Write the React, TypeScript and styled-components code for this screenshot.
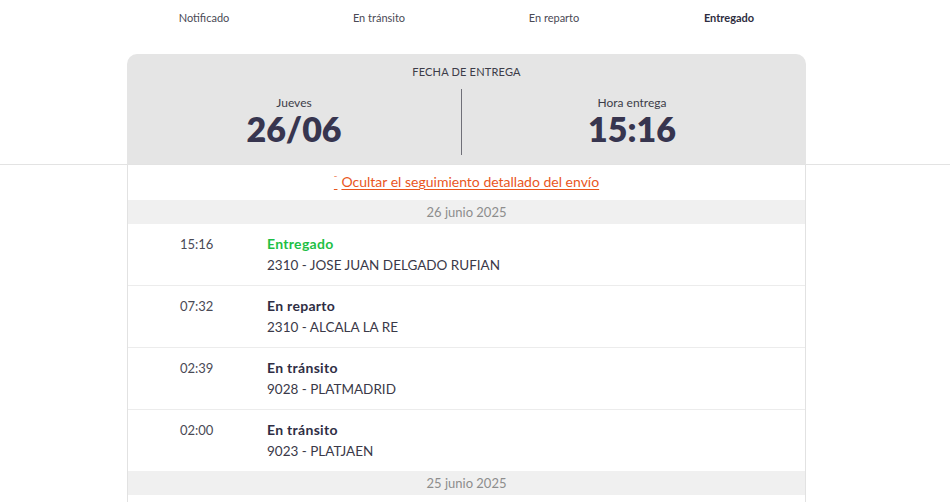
import React from "react";
import styled, { createGlobalStyle } from "styled-components";

const Global = createGlobalStyle`
  html, body { margin: 0; padding: 0; background: #fff; }
  body { font-family: Lato, "Open Sans", sans-serif; color: #35344a; overflow: hidden; }
`;

const Page = styled.div`
  width: 100%;
`;

const Center = styled.div`
  padding-right: 17px;
`;

const Steps = styled.div`
  width: 700px;
  margin: 0 auto;
  display: grid;
  grid-template-columns: repeat(4, 1fr);
  height: 36px;
`;

const Step = styled.div<{ $active?: boolean }>`
  text-align: center;
  font-size: 11px;
  line-height: 36px;
  color: ${(p) => (p.$active ? "#2e2d40" : "#4a4a55")};
  font-weight: ${(p) => (p.$active ? 700 : 400)};
`;

const Top = styled.div`
  width: 679px;
  margin: 18px auto 0;
`;

const DeliveryCard = styled.div`
  background: #e5e5e5;
  border-radius: 10px 10px 0 0;
  padding-top: 12px;
  height: 110px;
  box-sizing: border-box;
`;

const CardTitle = styled.div`
  text-align: center;
  font-size: 11px;
  line-height: 12px;
  color: #3c3c48;
  letter-spacing: 0.2px;
`;

const Split = styled.div`
  margin-top: 11px;
  display: grid;
  grid-template-columns: 334px 1px 1fr;
  height: 66px;
`;

const Divider = styled.div`
  background: #6f6f78;
`;

const Half = styled.div<{ $shift?: number }>`
  display: flex;
  flex-direction: column;
  align-items: center;
  padding-top: 7px;
  padding-right: ${(p) => p.$shift ?? 0}px;
`;

const Small = styled.div`
  font-size: 12px;
  line-height: 14px;
  color: #3c3c48;
`;

const Big = styled.div`
  margin-top: 3px;
  font-size: 34px;
  line-height: 32px;
  font-weight: 800;
  color: #37354f;
`;

const Body = styled.div`
  border-top: 1px solid #e3e3e3;
`;

const List = styled.div`
  width: 679px;
  margin: 0 auto;
  border-left: 1px solid #e2e2e2;
  border-right: 1px solid #e2e2e2;
  box-sizing: border-box;
`;

const LinkRow = styled.div`
  height: 35px;
  display: flex;
  align-items: center;
  justify-content: center;
  padding-bottom: 2px;
  box-sizing: border-box;
`;

const Toggle = styled.a`
  color: #e9561d;
  font-size: 14px;
  text-decoration: underline;
  text-underline-offset: 2px;
  cursor: pointer;
`;

const Caret = styled.span`
  font-size: 9px;
  vertical-align: 4px;
  margin-right: 4px;
`;

const DateBar = styled.div`
  background: #f0f0f0;
  height: 24px;
  line-height: 24px;
  text-align: center;
  font-size: 13px;
  color: #8d8d8d;
`;

const Row = styled.div`
  display: grid;
  grid-template-columns: 139px 1fr;
  padding: 12px 0 12px 0;
  border-bottom: 1px solid #ececec;
  &:last-of-type { border-bottom: none; }
`;

const Time = styled.div`
  font-size: 13px;
  line-height: 16px;
  color: #4a4a55;
  padding-left: 52px;
`;

const Info = styled.div`
  display: flex;
  flex-direction: column;
  gap: 5px;
`;

const Status = styled.div<{ $done?: boolean }>`
  font-size: 14px;
  line-height: 16px;
  font-weight: 700;
  letter-spacing: 0.3px;
  color: ${(p) => (p.$done ? "#1fbf45" : "#2f2e44")};
`;

const Place = styled.div`
  font-size: 13.5px;
  line-height: 16px;
  color: #3a3948;
`;

const events = [
  { time: "15:16", status: "Entregado", place: "2310 - JOSE JUAN DELGADO RUFIAN", done: true },
  { time: "07:32", status: "En reparto", place: "2310 - ALCALA LA RE" },
  { time: "02:39", status: "En tránsito", place: "9028 - PLATMADRID" },
  { time: "02:00", status: "En tránsito", place: "9023 - PLATJAEN" },
];

export default function App() {
  return (
    <Page>
      <Global />
      <Center>
        <Steps>
          <Step>Notificado</Step>
          <Step>En tránsito</Step>
          <Step>En reparto</Step>
          <Step $active>Entregado</Step>
        </Steps>
        <Top>
          <DeliveryCard>
            <CardTitle>FECHA DE ENTREGA</CardTitle>
            <Split>
              <Half>
                <Small>Jueves</Small>
                <Big>26/06</Big>
              </Half>
              <Divider />
              <Half $shift={4}>
                <Small>Hora entrega</Small>
                <Big>15:16</Big>
              </Half>
            </Split>
          </DeliveryCard>
        </Top>
      </Center>
      <Body>
        <Center>
          <List>
            <LinkRow>
              <Toggle>
                <Caret>¯</Caret>Ocultar el seguimiento detallado del envío
              </Toggle>
            </LinkRow>
            <DateBar>26 junio 2025</DateBar>
            <div>
              {events.map((e, i) => (
                <Row key={i}>
                  <Time>{e.time}</Time>
                  <Info>
                    <Status $done={e.done}>{e.status}</Status>
                    <Place>{e.place}</Place>
                  </Info>
                </Row>
              ))}
            </div>
            <DateBar>25 junio 2025</DateBar>
            <Row>
              <Time>21:40</Time>
              <Info>
                <Status>En tránsito</Status>
                <Place>9023 - PLATJAEN</Place>
              </Info>
            </Row>
          </List>
        </Center>
      </Body>
    </Page>
  );
}
